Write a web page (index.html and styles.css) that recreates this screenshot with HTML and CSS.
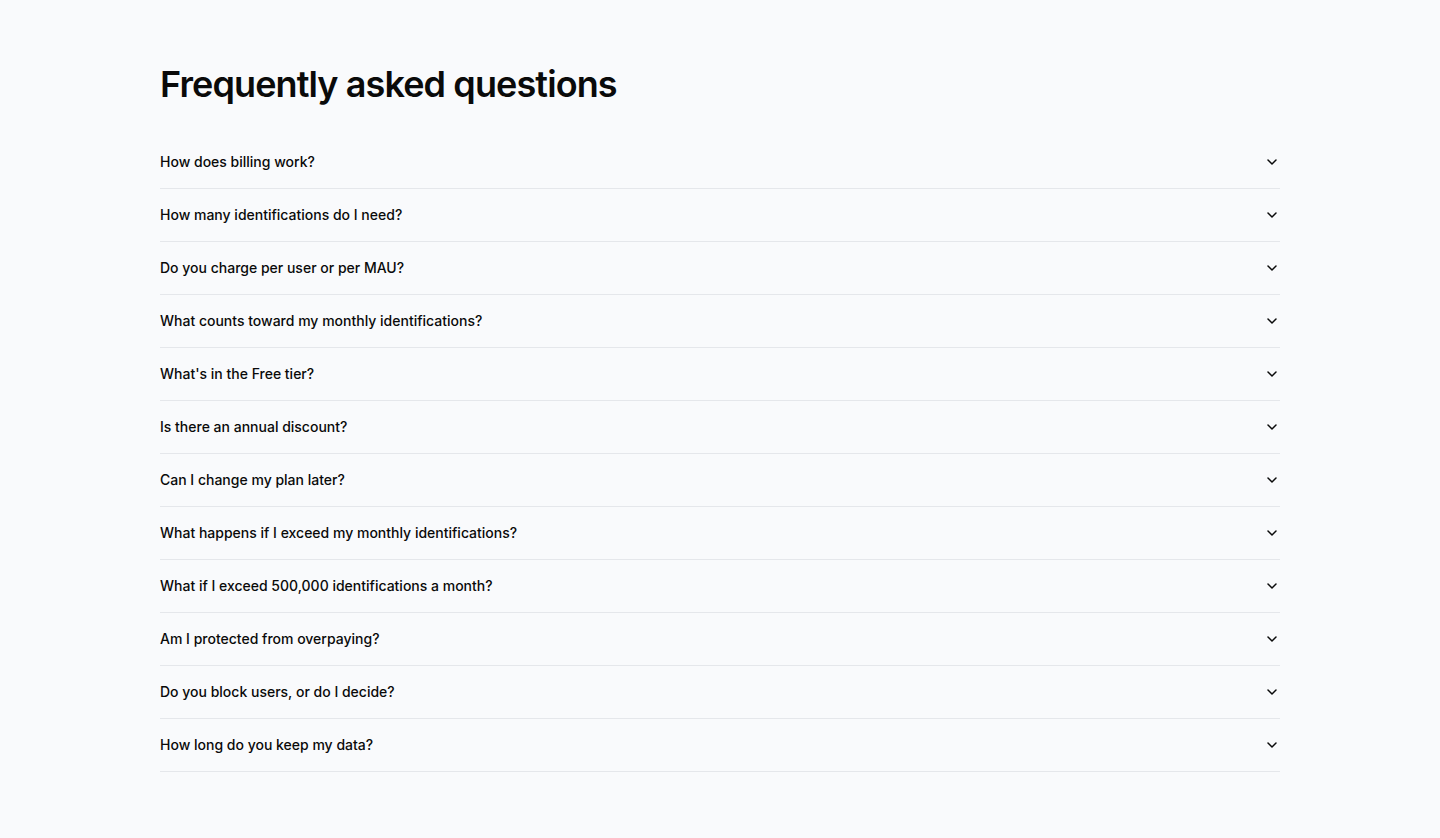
FILE: index.html
```html
<!DOCTYPE html>
<html lang="en">
<head>
    <meta charset="UTF-8">
    <meta name="viewport" content="width=device-width, initial-scale=1.0">
    <title>FAQ</title>
    <link rel="stylesheet" href="styles.css">
</head>
<body>

    <section class="faq">
        <h2 class="faq-title">Frequently asked questions</h2>

        <div class="faq-list">
            <details class="faq-item">
                <summary>How does billing work?<svg class="chevron" viewBox="0 0 16 16"><path d="M4 6l4 4 4-4"/></svg></summary>
            </details>
            <details class="faq-item">
                <summary>How many identifications do I need?<svg class="chevron" viewBox="0 0 16 16"><path d="M4 6l4 4 4-4"/></svg></summary>
            </details>
            <details class="faq-item">
                <summary>Do you charge per user or per MAU?<svg class="chevron" viewBox="0 0 16 16"><path d="M4 6l4 4 4-4"/></svg></summary>
            </details>
            <details class="faq-item">
                <summary>What counts toward my monthly identifications?<svg class="chevron" viewBox="0 0 16 16"><path d="M4 6l4 4 4-4"/></svg></summary>
            </details>
            <details class="faq-item">
                <summary>What's in the Free tier?<svg class="chevron" viewBox="0 0 16 16"><path d="M4 6l4 4 4-4"/></svg></summary>
            </details>
            <details class="faq-item">
                <summary>Is there an annual discount?<svg class="chevron" viewBox="0 0 16 16"><path d="M4 6l4 4 4-4"/></svg></summary>
            </details>
            <details class="faq-item">
                <summary>Can I change my plan later?<svg class="chevron" viewBox="0 0 16 16"><path d="M4 6l4 4 4-4"/></svg></summary>
            </details>
            <details class="faq-item">
                <summary>What happens if I exceed my monthly identifications?<svg class="chevron" viewBox="0 0 16 16"><path d="M4 6l4 4 4-4"/></svg></summary>
            </details>
            <details class="faq-item">
                <summary>What if I exceed 500,000 identifications a month?<svg class="chevron" viewBox="0 0 16 16"><path d="M4 6l4 4 4-4"/></svg></summary>
            </details>
            <details class="faq-item">
                <summary>Am I protected from overpaying?<svg class="chevron" viewBox="0 0 16 16"><path d="M4 6l4 4 4-4"/></svg></summary>
            </details>
            <details class="faq-item">
                <summary>Do you block users, or do I decide?<svg class="chevron" viewBox="0 0 16 16"><path d="M4 6l4 4 4-4"/></svg></summary>
            </details>
            <details class="faq-item">
                <summary>How long do you keep my data?<svg class="chevron" viewBox="0 0 16 16"><path d="M4 6l4 4 4-4"/></svg></summary>
            </details>
        </div>
    </section>

</body>
</html>
```

FILE: styles.css
```css
* {
    margin: 0;
    padding: 0;
    box-sizing: border-box;
}

body {
    font-family: Inter, 'Noto Sans', sans-serif;
    background: #f9fafc;
    color: #0a0a0a;
    min-height: 100vh;
}

.faq {
    max-width: 1120px;
    margin: 0 auto;
    padding: 64px 0 66px;
}

.faq-title {
    font-size: 36px;
    line-height: 40px;
    font-weight: 600;
    letter-spacing: -0.9px;
    margin-bottom: 32px;
}

.faq-item {
    border-bottom: 1px solid #e5e7eb;
}

.faq-item summary {
    list-style: none;
    display: flex;
    justify-content: space-between;
    align-items: center;
    padding: 16px 0;
    font-size: 14px;
    line-height: 20px;
    font-weight: 500;
    cursor: pointer;
}

.faq-item summary::-webkit-details-marker {
    display: none;
}

.chevron {
    width: 16px;
    height: 16px;
    fill: none;
    stroke: #0a0a0a;
    stroke-width: 1.5;
    stroke-linecap: round;
    stroke-linejoin: round;
}

.faq-item[open] .chevron {
    transform: rotate(180deg);
}
```
